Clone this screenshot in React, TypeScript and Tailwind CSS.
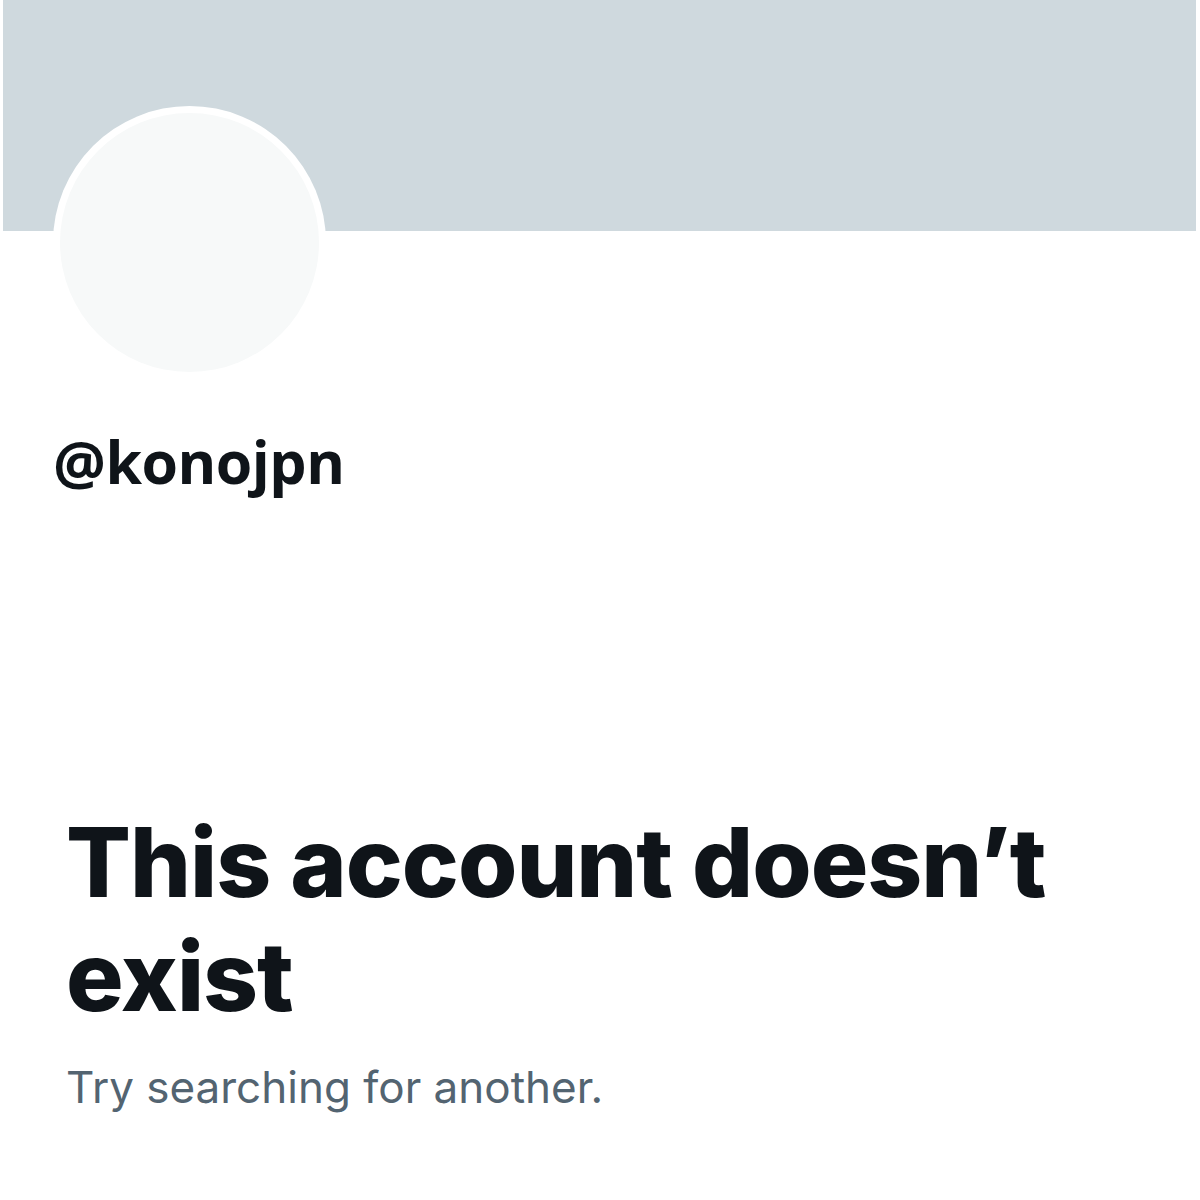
export default function App() {
  return (
    <div className="w-[1200px] h-[1200px] bg-white overflow-hidden">
      {/* BANNER */}
      <div className="ml-[3px] w-[1193px] h-[231px] bg-[#cfd9de]" />

      {/* AVATAR + HANDLE */}
      <div className="px-[53px]">
        <div className="-mt-[125px] w-[273px] h-[273px] rounded-full bg-white p-[7px]">
          <div className="w-full h-full rounded-full bg-[#f7f9f9]" />
        </div>
        <p className="mt-[50px] text-[59px] leading-[64px] font-bold text-[#0f1419] font-['Open_Sans',sans-serif] tracking-[-0.5px]">
          @konojpn
        </p>
      </div>

      {/* EMPTY STATE */}
      <div className="pl-[66px] mt-[312px] font-['Inter',sans-serif]">
        <h1 className="text-[96px] leading-[114px] font-extrabold text-[#0f1419] tracking-[-1px]">
          This account doesn’t exist
        </h1>
        <p className="mt-[26px] text-[44px] leading-[56px] text-[#536471]">
          Try searching for another.
        </p>
      </div>
    </div>
  );
}
